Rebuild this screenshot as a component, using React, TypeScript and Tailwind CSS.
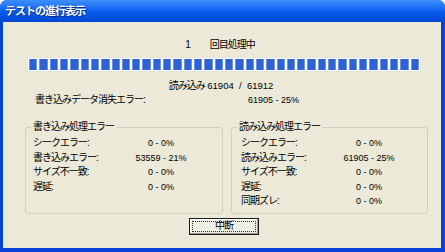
const chunks = Array.from({ length: 38 });

type Row = { label: string; value: string };

const writeRows: Row[] = [
    { label: "シークエラー:", value: "0 - 0%" },
    { label: "書き込みエラー:", value: "53559 - 21%" },
    { label: "サイズ不一致:", value: "0 - 0%" },
    { label: "遅延:", value: "0 - 0%" },
];

const readRows: Row[] = [
    { label: "シークエラー:", value: "0 - 0%" },
    { label: "読み込みエラー:", value: "61905 - 25%" },
    { label: "サイズ不一致:", value: "0 - 0%" },
    { label: "遅延:", value: "0 - 0%" },
    { label: "同期ズレ:", value: "0 - 0%" },
];

function GroupBox({ title, rows, className, pad }: { title: string; rows: Row[]; className: string; pad: string }) {
    return (
        <fieldset className={"border border-[#d0d0bf] rounded-[3px] pb-[4px] " + className}>
            <legend className="ml-[5px] px-[2px] leading-[14px] tracking-[-1px]">{title}</legend>
            <div className={"grid grid-cols-[95px_66px] pt-[2px] " + pad}>
                {rows.map((r) => (
                    <div key={r.label} className="contents">
                        <div className="h-[14.5px] leading-[14.5px] tracking-[-1px] whitespace-nowrap">{r.label}</div>
                        <div className="h-[14.5px] leading-[14.5px] text-center text-[9px] whitespace-pre">{r.value}</div>
                    </div>
                ))}
            </div>
        </fieldset>
    );
}

export default function App() {
    return (
        <div className="w-[445px] h-[252px] flex flex-col bg-[#0842d6] rounded-t-[7px] overflow-hidden font-['Liberation_Sans','Noto_Sans_CJK_JP',sans-serif] text-[10px] text-black">
            {/* title bar */}
            <div className="h-[22px] shrink-0 flex items-center pl-[5px] bg-gradient-to-b from-[#3d8ffb] via-[#0a5ff0] to-[#0046d4]">
                <span className="text-white font-bold text-[11px] tracking-[-1px] [text-shadow:1px_1px_0_#0a2a8a]">
                    テストの進行表示
                </span>
            </div>

            {/* client area */}
            <div className="flex-1 ml-[3px] mr-[4px] mb-[4px] bg-[#ece9d8] flex flex-col">
                <div className="mt-[16px] h-[14px] leading-[14px] flex justify-center gap-[19px] pr-[4px]">
                    <span>1</span>
                    <span className="tracking-[-1px]">回目処理中</span>
                </div>

                {/* progress bar */}
                <div className="mt-[5px] ml-[24px] mr-[20px] h-[15px] bg-white border border-[#e4e4e4] p-[1px] flex gap-[2px]">
                    {chunks.map((_, i) => (
                        <div key={i} className="flex-1 bg-[#2f62d2] border-x border-[#6f93e2]" />
                    ))}
                </div>

                <div className="mt-[7px] h-[14px] leading-[14px] flex justify-center pr-[2px] whitespace-pre">
                    <span className="tracking-[-1px]">読み込み</span>
                    <span className="text-[9.5px]"> 61904  /  61912</span>
                </div>

                <div className="h-[14px] leading-[14px] flex pl-[32px]">
                    <span className="w-[213px] tracking-[-1px]">書き込みデータ消失エラー:</span>
                    <span className="text-[9px] whitespace-pre">61905 - 25%</span>
                </div>

                {/* group boxes */}
                <div className="mt-[13px] flex gap-[8px] ml-[22px]">
                    <GroupBox title="書き込み処理エラー" rows={writeRows} className="w-[198px]" pad="pl-[7px]" />
                    <GroupBox title="読み込み処理エラー" rows={readRows} className="w-[197px]" pad="pl-[9px]" />
                </div>

                <div className="mt-[4px] flex justify-center pl-[4px]">
                    <button className="w-[70px] h-[17px] border border-[#1c1c1c] bg-[#f0efe6] shadow-[inset_-1px_-1px_0_#9d9a8c,inset_1px_1px_0_#ffffff] p-[2px]">
                        <div className="w-full h-full border border-dotted border-[#333] flex items-center justify-center leading-none tracking-[-1px]">
                            中断
                        </div>
                    </button>
                </div>
            </div>
        </div>
    );
}
